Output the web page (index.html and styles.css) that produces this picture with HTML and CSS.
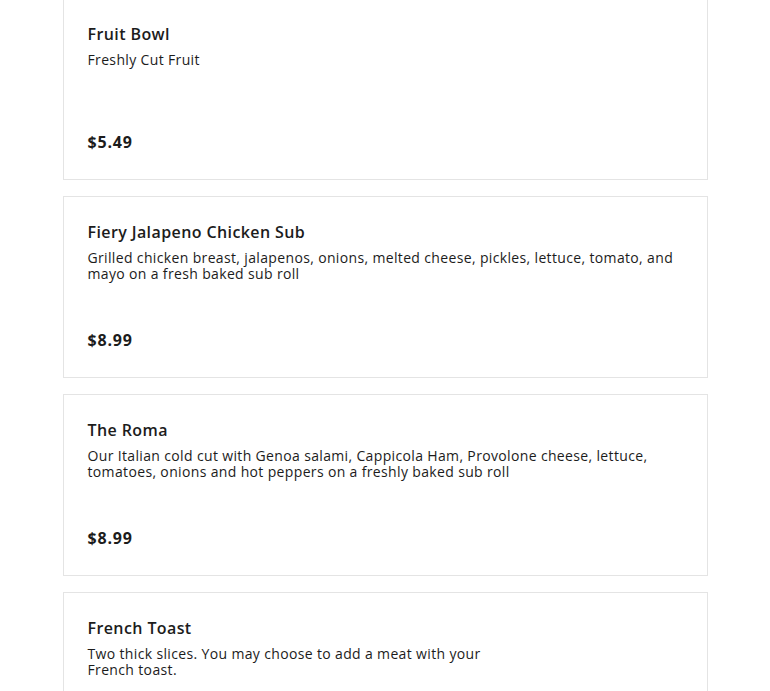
FILE: index.html
```html
<!DOCTYPE html>
<html>
<head>
<meta charset="utf-8">
<link rel="stylesheet" href="styles.css">
</head>
<body>
<main class="menu">
  <article class="card">
    <div class="info">
      <h3 class="name">Fruit Bowl</h3>
      <p class="desc">Freshly Cut Fruit</p>
    </div>
    <div class="price">$5.49</div>
  </article>
  <article class="card">
    <div class="info">
      <h3 class="name">Fiery Jalapeno Chicken Sub</h3>
      <p class="desc">Grilled chicken breast, jalapenos, onions, melted cheese, pickles, lettuce, tomato, and mayo on a fresh baked sub roll</p>
    </div>
    <div class="price">$8.99</div>
  </article>
  <article class="card">
    <div class="info">
      <h3 class="name">The Roma</h3>
      <p class="desc">Our Italian cold cut with Genoa salami, Cappicola Ham, Provolone cheese, lettuce, tomatoes, onions and hot peppers on a freshly baked sub roll</p>
    </div>
    <div class="price">$8.99</div>
  </article>
  <article class="card">
    <div class="info">
      <h3 class="name">French Toast</h3>
      <p class="desc narrow">Two thick slices. You may choose to add a meat with your French toast.</p>
    </div>
    <div class="price">$6.49</div>
  </article>
</main>
</body>
</html>
```
FILE: styles.css
```css
html, body {
  margin: 0;
  padding: 0;
  background: #ffffff;
}
body {
  font-family: "Open Sans", "Liberation Sans", sans-serif;
  color: #1c1c1c;
}
.menu {
  width: 645px;
  margin: -2px auto 0;
  display: flex;
  flex-direction: column;
  gap: 16px;
}
.card {
  box-sizing: border-box;
  height: 182px;
  border: 1px solid #e4e4e4;
  padding: 23px 24px 25px;
  display: flex;
  flex-direction: column;
  justify-content: space-between;
}
.name {
  margin: 0;
  font-size: 16px;
  line-height: 24px;
  font-weight: 600;
  letter-spacing: 0.4px;
}
.desc {
  margin: 6px 0 0;
  font-size: 14px;
  line-height: 16px;
  font-weight: 400;
  letter-spacing: 0.35px;
}
.desc.narrow {
  max-width: 420px;
}
.price {
  font-size: 16px;
  line-height: 24px;
  font-weight: 700;
  letter-spacing: 0.8px;
}
```
